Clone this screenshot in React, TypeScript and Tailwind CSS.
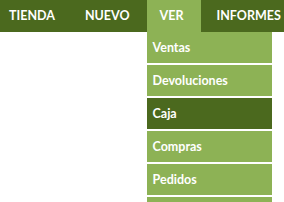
export default function App() {
  const items = ["Ventas", "Devoluciones", "Caja", "Compras", "Pedidos", ""];
  return (
    <div className="w-[284px] h-[202px] bg-white overflow-hidden relative" style={{ fontFamily: "Lato, 'Noto Sans', sans-serif" }}>
      <div className="h-[32px] bg-[#4b691e] flex items-stretch text-white font-bold text-[12.5px]">
        <div className="pl-[9px] pr-[30px] flex items-center">TIENDA</div>
        <div className="pr-[17px] flex items-center">NUEVO</div>
        <div className="relative w-[54px] bg-[#8db255] flex items-center pl-[13px]">
          VER
          <div className="absolute left-0 top-[32px] w-[125px] flex flex-col">
            {items.map((t, i) => (
              <div
                key={i}
                className={`h-[33px] border-b-2 border-white flex items-center pl-[6px] pt-[1px] font-bold text-[12.5px] text-white ${t === "Caja" ? "bg-[#4b691e]" : "bg-[#8db255]"}`}
              >
                {t}
              </div>
            ))}
          </div>
        </div>
        <div className="pl-[16px] flex items-center">INFORMES</div>
      </div>
    </div>
  );
}
